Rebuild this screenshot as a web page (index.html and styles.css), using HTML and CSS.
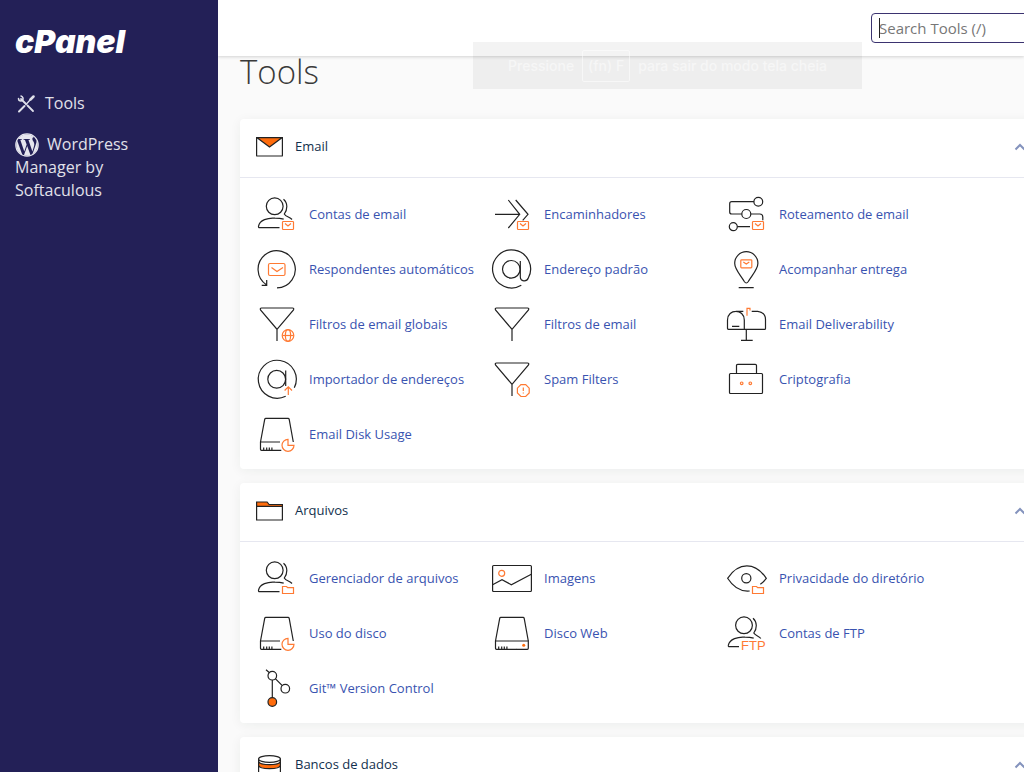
FILE: index.html
```
<!DOCTYPE html>
<html lang="pt-BR">
<head>
<meta charset="utf-8">
<title>cPanel - Tools</title>
<meta name="viewport" content="width=device-width, initial-scale=1">
<link rel="stylesheet" href="styles.css">
</head>
<body>
<svg class="sprite" aria-hidden="true">
  <symbol id="mail-badge" viewBox="0 0 40 40"><g class="accent"><rect x="25.5" y="27.5" width="11" height="8" rx=".8"/><path d="M28 29.5l3 2.5 3-2.5"/></g></symbol>
  <symbol id="folder-badge" viewBox="0 0 40 40"><path class="accent" d="M25.5 35.5v-7h4l1.2 1.2h5.8v5.8z"/></symbol>
  <symbol id="user" viewBox="0 0 40 40"><circle cx="17.7" cy="12.3" r="8.4"/><path d="M26.5 5.3c4.600 4 4 10.500.8 14.700 1.500 2.800 5.500 3 7.700 5.500M22.500 33.700h-20q-1.200 0-1-1.300C2.500 26 11 23.600 18 24.200q5 0 8.700 1"/></symbol>
  <symbol id="disk" viewBox="0 0 40 40"><path d="M24.300 36.300H4.500q-1 0-1-1V28L7.700 5.300q.2-1 1.200-1H31q1 0 1.200 1L36.300 28M3.500 28H23M6.700 33.500v2.800M9.700 33.500v2.800M12.300 33.500v2.800M14.900 33.500v2.800"/></symbol>
  <symbol id="pie" viewBox="0 0 40 40"><path class="accent" d="M31 25.300A6 6 0 1 0 37 31.300h-6z"/></symbol>
  <symbol id="funnel" viewBox="0 0 40 40"><path d="M20 37V25.300L3.500 6Q2.800 4 4.500 4h31q1.800 0 1 2L20 25.300"/></symbol>
  <symbol id="chevron-up" viewBox="0 0 12 8"><path d="M1.500 6.500L6 2l4.500 4.500" stroke="#8493bd" stroke-width="2"/></symbol>
</svg>

<div class="app">
  <aside class="sidebar">
    <a class="logo" href="#">cPanel</a>
    <nav class="menu">
      <a href="#"><svg class="menu-tools" viewBox="0 0 18 18"><g stroke="#dfe0ea" stroke-linecap="round"><path d="M4 4l5 5M10.500 10.500l5.500 5.500" stroke-width="1.800"/><path d="M1.500 3.500q0 2.500 2.500 2.500 2.500-.5 2-3Q5.500 1.500 4 1" stroke-width="1.500"/><path d="M2 16.500l5.500-5.500" stroke-width="2"/><path d="M9 9.500l4.500-5" stroke-width="1.300"/><path d="M13.500 4.500L16.500 1.500" stroke-width="2.500"/></g></svg>Tools</a>
      <a href="#"><svg class="menu-wp" viewBox="0 0 24 24"><circle cx="12" cy="12" r="11.200" stroke="#e6e6ee" stroke-width="1.200"/><path fill="#e6e6ee" stroke="none" d="M21.469 6.825c.84 1.537 1.318 3.300 1.318 5.175 0 3.979-2.156 7.456-5.363 9.325l3.295-9.527c.615-1.540.82-2.771.82-3.864 0-.405-.026-.78-.07-1.110m-7.981.105c.647-.03 1.232-.105 1.232-.105.582-.075.514-.93-.067-.899 0 0-1.755.135-2.880.135-1.064 0-2.850-.15-2.850-.15-.585-.03-.661.855-.075.885 0 0 .54.061 1.125.09l1.680 4.605-2.370 7.080L5.354 6.900c.649-.03 1.234-.1 1.234-.1.585-.075.516-.93-.065-.896 0 0-1.746.138-2.874.138-.2 0-.438-.008-.69-.015C4.911 3.150 8.235 1.215 12 1.215c2.809 0 5.365 1.072 7.286 2.833-.046-.003-.091-.009-.141-.009-1.060 0-1.812.923-1.812 1.914 0 .89.513 1.643 1.060 2.531.411.72.89 1.643.89 2.977 0 .915-.354 1.994-.821 3.479l-1.075 3.585-3.900-11.610zM12 22.784c-1.059 0-2.081-.153-3.048-.437l3.237-9.406 3.315 9.087c.024.053.05.101.078.149-1.120.393-2.325.609-3.582.609M1.211 12c0-1.564.336-3.050.935-4.390L7.290 21.709C3.694 19.960 1.212 16.271 1.211 12"/></svg>WordPress Manager by Softaculous</a>
    </nav>
  </aside>

  <div class="page">
    <header class="topbar">
      <div class="search">
        <input type="text" aria-label="Search Tools" placeholder="Search Tools (/)">
        <span class="caret"></span>
      </div>
    </header>
    <div class="toast" role="status"><span>Pressione</span><kbd>(fn) F</kbd><span>para sair do modo tela cheia</span></div>

    <main class="content">
      <h1>Tools</h1>

      <section class="card">
        <h2 class="card-head">
          <svg class="head-icon" viewBox="0 0 27 20"><rect x=".6" y=".6" width="25.800" height="18.400" rx=".6"/><path fill="#ff6c0c" d="M.8.600h25.400L13.500 10z"/></svg>
          <span>Email</span>
          <button type="button" class="toggle" aria-label="Recolher Email"><svg viewBox="0 0 12 8"><use href="#chevron-up"/></svg></button>
        </h2>
        <div class="items">
          <a href="#"><svg viewBox="0 0 40 40"><use href="#user"/><use href="#mail-badge"/></svg>Contas de email</a>
          <a href="#"><svg viewBox="0 0 40 40"><path d="M3 20.300h24.700M16.300 6l11.400 14.300L16.300 34M23.700 6L36 20.300l-5.300 6"/><use href="#mail-badge"/></svg>Encaminhadores</a>
          <a href="#"><svg viewBox="0 0 40 40"><circle cx="31.300" cy="7.700" r="4.400"/><circle cx="19.300" cy="20" r="4.500"/><circle cx="6.300" cy="32.700" r="4"/><path d="M27 7.700H4.700q-2 0-2 2V18q0 2 2 2h10.100M23.800 20h9q3 0 3 3v3.300M10.300 32.700H23"/><use href="#mail-badge"/></svg>Roteamento de email</a>
          <a href="#"><svg viewBox="0 0 40 40"><path d="M20 38.900A18.600 18.600 0 1 0 9.700 36M4.700 36.300h5V31"/><g class="accent"><rect x="11.500" y="14.500" width="16.500" height="12" rx="1.500"/><path d="M14.500 18.500l5.500 4 6-4"/></g></svg>Respondentes automáticos</a>
          <a href="#"><svg viewBox="0 0 40 40"><circle cx="19.300" cy="20.300" r="8.800"/><path d="M28.300 12v15.500c0 5.500 6.500 5.500 8 1.500A19 19 0 1 0 29.300 36.300"/></svg>Endereço padrão</a>
          <a href="#"><svg viewBox="0 0 40 40"><path d="M19.300 34q-1 0-2-1.500C13.500 26 7.700 20.500 7.700 14.300a11.600 11.600 0 0 1 23.200 0c0 6.200-5.800 11.700-9.600 18.200q-1 1.500-2 1.500zM11.700 38.600h15"/><g class="accent"><rect x="13.800" y="10.800" width="11" height="8" rx=".8"/><path d="M16.300 13l3 2 3-2"/></g></svg>Acompanhar entrega</a>
          <a href="#"><svg viewBox="0 0 40 40"><use href="#funnel"/><g class="accent"><circle cx="31" cy="31.500" r="5.800"/><ellipse cx="31" cy="31.500" rx="2.600" ry="5.800"/><path d="M25.500 31.500h11"/></g></svg>Filtros de email globais</a>
          <a href="#"><svg viewBox="0 0 40 40"><use href="#funnel"/></svg>Filtros de email</a>
          <a href="#"><svg viewBox="0 0 40 40"><path d="M17.300 25.300H1.500q-1 0-1-1V16c0-11.600 16.800-11.600 16.800 0zM8.700 7.400h7.600M24.700 7.400h6q7.800 1 7.800 8v9q0 .9-1 .9H17.300M5 22.300h7.300M19.300 25.300v11M14 36.300h11.700"/><path class="accent" d="M23 6.500V4.300h-3v7.500"/></svg>Email Deliverability</a>
          <a href="#"><svg viewBox="0 0 40 40"><path d="M37.300 28.700A19 19 0 1 0 28.700 37.300M28.700 11.500V27"/><circle cx="19.700" cy="20.300" r="8.900"/><path class="accent" d="M31.300 36v-8.300M27.600 31.500l3.700-3.700 3.700 3.700"/></svg>Importador de endereços</a>
          <a href="#"><svg viewBox="0 0 40 40"><use href="#funnel"/><path class="accent" d="M28.900 25.700h4.800l3.500 3.500V34l-3.500 3.500h-4.800L25.400 34v-4.800zM31.300 28.500v3.500M31.300 33.500v1"/></svg>Spam Filters</a>
          <a href="#"><svg viewBox="0 0 40 40"><rect x="2.500" y="14.500" width="33" height="20" rx="1"/><path d="M9.500 14.500v-8q0-1.200 1.200-1.200h17.600q1.200 0 1.200 1.200v8"/><g class="accent"><circle cx="14.700" cy="24.300" r="1.300"/><circle cx="23.300" cy="24.300" r="1.300"/></g></svg>Criptografia</a>
          <a href="#"><svg viewBox="0 0 40 40"><use href="#disk"/><use href="#pie"/></svg>Email Disk Usage</a>
        </div>
      </section>

      <section class="card">
        <h2 class="card-head">
          <svg class="head-icon" viewBox="0 0 27 20"><path fill="#ff6c0c" d="M.6 5.500V1h10.500l2 2.500h13.300v2z"/><path d="M.6 5.300h25.800v13.700H.6z"/></svg>
          <span>Arquivos</span>
          <button type="button" class="toggle" aria-label="Recolher Arquivos"><svg viewBox="0 0 12 8"><use href="#chevron-up"/></svg></button>
        </h2>
        <div class="items">
          <a href="#"><svg viewBox="0 0 40 40"><use href="#user"/><use href="#folder-badge"/></svg>Gerenciador de arquivos</a>
          <a href="#"><svg viewBox="0 0 40 40"><rect x=".6" y="7.500" width="38.800" height="26" rx="1"/><path d="M.6 26.700l9.400-5 9.300 5 20-10.400"/><circle class="accent" cx="9.700" cy="15.300" r="3"/></svg>Imagens</a>
          <a href="#"><svg viewBox="0 0 40 40"><path d="M22.700 33C13 34 6.500 29.500.6 20.300c11-16.500 27.500-16.500 38.700 0q-3 4-6 6"/><circle cx="19.300" cy="20.300" r="4.600"/><use href="#folder-badge"/></svg>Privacidade do diretório</a>
          <a href="#"><svg viewBox="0 0 40 40"><use href="#disk"/><use href="#pie"/></svg>Uso do disco</a>
          <a href="#"><svg viewBox="0 0 40 40"><use href="#disk"/><path d="M23 28h13.300v7.300q0 1-1 1H24"/><circle cx="31.700" cy="32.300" r="1.500" fill="#ff6c0c" stroke="none"/></svg>Disco Web</a>
          <a href="#"><svg viewBox="0 0 40 40"><circle cx="17" cy="12.300" r="8.400"/><path d="M26 5.300c4.500 4 4 10.500.8 14.700 1.500 2.800 5.500 3 7 5.500M12 33.700H2.500q-1.500 0-1.200-1.300C2.500 26 11 23.600 18 24.200q5 0 8.700 1"/><text class="icon-text" x="14" y="37.300">FTP</text></svg>Contas de FTP</a>
          <a href="#"><svg viewBox="0 0 40 40"><path d="M9 1.700l3.500 3M15.300 12v17.700M18.300 10.700l7 7"/><circle cx="15.300" cy="7.700" r="4.300"/><circle cx="28.300" cy="20.700" r="4.300"/><circle cx="15.300" cy="34" r="4.300" fill="#ff6c0c"/></svg>Git™ Version Control</a>
        </div>
      </section>

      <section class="card">
        <h2 class="card-head">
          <svg class="head-icon" viewBox="0 0 27 20"><path d="M2.600 3.700V17c0 4 21.800 4 21.800 0V3.700"/><path fill="#ff6c0c" d="M2.600 6.300c1 4.400 20.800 4.400 21.800 0v4c-1 4.400-20.800 4.400-21.800 0z"/><ellipse cx="13.500" cy="4" rx="10.900" ry="3.300" fill="#fff"/></svg>
          <span>Bancos de dados</span>
          <button type="button" class="toggle" aria-label="Recolher Bancos de dados"><svg viewBox="0 0 12 8"><use href="#chevron-up"/></svg></button>
        </h2>
      </section>
    </main>
  </div>
</div>
</body>
</html>
```

FILE: styles.css
```
* { box-sizing: border-box; }

body {
  margin: 0;
  font-family: "Open Sans", "Noto Sans", sans-serif;
  font-size: 13px;
  background: #fafafa;
}

a { text-decoration: none; }
svg { fill: none; }
.sprite { display: none; }

.app {
  display: flex;
  height: 100vh;
  overflow: hidden;
}

/* Sidebar */
.sidebar {
  flex: none;
  width: 218px;
  padding: 20px 60px 0 15px;
  background: #232057;
}

.logo {
  display: block;
  color: #fff;
  font-family: Inter, sans-serif;
  font-size: 32px;
  font-weight: 900;
  font-style: italic;
  line-height: 44px;
}

.menu {
  display: flex;
  flex-direction: column;
  gap: 18px;
  margin-top: 28px;
}

.menu a {
  color: #e1e1ea;
  font-size: 16px;
  line-height: 23px;
}

.menu svg { vertical-align: middle; }
.menu-tools { width: 18px; height: 18px; margin: -2px 10px 0 2px; }
.menu-wp { width: 24px; height: 24px; margin: -4px 8px -2px 0; }

/* Page */
.page {
  position: relative;
  flex: 1;
  min-width: 0;
  overflow: hidden;
}

.topbar {
  display: flex;
  justify-content: flex-end;
  height: 56px;
  padding-top: 13px;
  background: #fff;
  box-shadow: 0 1px 3px rgba(0, 0, 0, .16);
}

.search {
  position: relative;
  width: 253px;
  margin-right: -100px;
}

.search input {
  width: 100%;
  height: 30px;
  padding: 0 7px;
  border: 1px solid #3b3370;
  border-radius: 4px;
  background: #fff;
  font: 15px "Open Sans", "Noto Sans", sans-serif;
}

.search input::placeholder { color: #777; opacity: 1; }

.caret {
  position: absolute;
  top: 5px;
  left: 8px;
  width: 1px;
  height: 20px;
  background: #222;
}

.toast {
  position: absolute;
  top: 42px;
  left: 50%;
  transform: translateX(-148px);
  display: flex;
  align-items: center;
  justify-content: center;
  gap: 8px;
  width: 389px;
  height: 47px;
  background: rgba(20, 25, 25, .05);
  color: rgba(255, 255, 255, .5);
  font-family: Inter, sans-serif;
  font-size: 14px;
  font-weight: 500;
  white-space: nowrap;
}

.toast kbd {
  padding: 6px 5px;
  border: 1px solid rgba(255, 255, 255, .5);
  border-radius: 2px;
  font: inherit;
  line-height: 18px;
}

.content {
  display: flex;
  flex-direction: column;
  gap: 14px;
  padding-left: 22px;
  margin-right: -20px;
}

h1 {
  margin: 0;
  padding-bottom: 17px;
  color: #3a3a3a;
  font-size: 33px;
  font-weight: 300;
  line-height: 32px;
}

.card {
  border-radius: 4px;
  background: #fff;
  box-shadow: 0 2px 12px rgba(20, 50, 40, .06);
}

.card-head {
  display: flex;
  align-items: center;
  gap: 12px;
  height: 59px;
  margin: 0;
  padding: 0 18px 2px 16px;
  border-bottom: 1px solid #e6e7f0;
  color: #12304d;
  font-size: 13px;
  font-weight: 400;
}

.card-head span { padding-bottom: 2px; }

.head-icon {
  width: 27px;
  height: 20px;
  stroke: #222;
  stroke-width: 1.200;
}

.toggle {
  display: flex;
  margin-left: auto;
  padding: 0;
  border: 0;
  background: none;
}

.toggle svg { width: 12px; height: 8px; }

.items {
  display: grid;
  grid-template-columns: repeat(auto-fill, 235px);
  padding: 8px 0;
}

.items a {
  display: flex;
  align-items: center;
  gap: 12px;
  height: 55px;
  padding-left: 17px;
  color: #3953b0;
  white-space: nowrap;
}

.items svg {
  flex: none;
  width: 40px;
  height: 40px;
  overflow: visible;
  stroke: #222;
  stroke-width: 1.200;
}

.items .accent, .accent { stroke: #ff7a33; }

.icon-text {
  fill: #ff7a33;
  stroke: none;
  font-family: "Liberation Sans", sans-serif;
  font-size: 13px;
}
```
